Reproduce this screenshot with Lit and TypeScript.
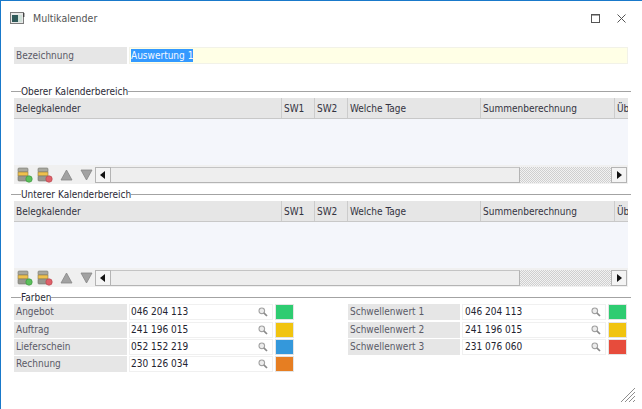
import { LitElement, html, css, svg } from "lit";
import { customElement } from "lit/decorators.js";

const COLS = [
  { t: "Belegkalender", w: 268 },
  { t: "SW1", w: 33 },
  { t: "SW2", w: 33 },
  { t: "Welche Tage", w: 133 },
  { t: "Summenberechnung", w: 134 },
  { t: "Üb", w: 13 },
];

const dbIcon = (c: string, d: string) => svg`<svg class="tool" viewBox="0 0 16 16" width="16" height="16">
  <rect x="1" y="1" width="10" height="4" rx="1" fill="#a8a8a0" stroke="#77776f" stroke-width=".6"/>
  <rect x="1" y="5" width="10" height="4" fill="#efc04c" stroke="#8a7a4a" stroke-width=".6"/>
  <rect x="1" y="9" width="10" height="5" rx="1" fill="#98988f" stroke="#77776f" stroke-width=".6"/>
  <circle cx="12" cy="12" r="3.2" fill="${c}" stroke="${d}" stroke-width=".7"/>
</svg>`;

const tri = (up: boolean) => svg`<svg class="tool" viewBox="0 0 13 12" width="13" height="12">
  <path d="${up ? "M6.5 1 L12 11 H1 Z" : "M1 1 H12 L6.5 11 Z"}" fill="#a2a2a2" stroke="#858585" stroke-width=".8"/>
</svg>`;

const lens = svg`<svg class="lens" viewBox="0 0 10 10" width="10" height="10">
  <circle cx="3.8" cy="3.8" r="2.8" fill="#ececec" stroke="#a2a2a2" stroke-width="1.1"/>
  <path d="M5.8 5.8 L9 9" stroke="#8a8a8a" stroke-width="1.7"/>
</svg>`;

@customElement("app-root")
export class AppRoot extends LitElement {
  static styles = css`
    :host {
      display: block;
      width: 642px;
      height: 409px;
      overflow: hidden;
      font-family: "DejaVu Sans Condensed", "DejaVu Sans", sans-serif;
      font-stretch: condensed;
    }
    .win {
      position: relative;
      box-sizing: border-box;
      height: 409px;
      background: #fff;
      border-top: 1px solid #1979ca;
      border-left: 1px solid #1979ca;
      padding: 0 11px 0 10px;
      font-size: 10px;
      color: #3a3a46;
      display: flex;
      flex-direction: column;
    }
    .title {
      height: 34px;
      margin: 0 -11px 0 -10px;
      padding: 0 0 0 9px;
      display: flex;
      align-items: center;
      gap: 8px;
      color: #555;
      font-size: 10.5px;
    }
    .ctrls { margin-left: auto; display: flex; gap: 17px; padding-right: 16px; align-items: center; }
    .ctrls svg { display: block; }
    .inner { padding: 0 3px; }
    .row { display: flex; gap: 2px; }
    .lab {
      width: 111px;
      padding-left: 2px;
      background: #e6e6e6;
      line-height: 16px;
      color: #5a5a66;
      white-space: nowrap;
      overflow: hidden;
    }
    .bez { margin-top: 12px; height: 17px; }
    .bez .lab { line-height: 17px; }
    .inp {
      flex: 1;
      box-sizing: border-box;
      background: #ffffe6;
      border: 1px solid #f2f2e8;
      padding-left: 1px;
      line-height: 14px;
    }
    .sel { background: #3399ff; color: #f4f8ff; display: inline-block; height: 13px; line-height: 13px; margin-top: 1px; }
    .legend { display: flex; align-items: center; height: 13px; color: #2a2a36; }
    .legend i { height: 1px; background: #a3a3a3; }
    .legend i:first-child { width: 10px; }
    .legend i:last-child { flex: 1; }
    .legend.l1 { margin-top: 21px; }
    .legend.l2 { margin-top: 4px; }
    .grid {
      height: 86px;
      background: #f4f6fb;
      display: flex;
      flex-direction: column;
    }
    .head {
      display: flex;
      box-sizing: border-box;
      height: 21px;
      background: #e6e6e6;
      border-bottom: 1px solid #c8c8c8;
      flex: none;
      overflow: hidden;
    }
    .head div {
      box-sizing: border-box;
      flex: none;
      padding-left: 2px;
      line-height: 21px;
      border-right: 1px solid #cccccc;
      white-space: nowrap;
      color: #33333f;
    }
    .head div:last-child { border-right: 0; overflow: hidden; padding-right: 0; }
    .spacer { flex: 1; }
    .bar { display: flex; align-items: center; height: 19px; padding-left: 3px; background: #f0f0f0; }
    .tool { display: block; }
    .tools { display: flex; align-items: center; width: 78px; gap: 4px; }
    .tools svg:nth-child(3) { margin-left: 3px; }
    .tools svg:nth-child(4) { margin-left: 3px; }
    .sb { flex: 1; display: flex; height: 16px; align-items: stretch; margin-right: 1px; }
    .btn {
      box-sizing: border-box;
      width: 16px;
      background: #f4f4f4;
      border: 1px solid #b4b4b4;
      display: flex;
      align-items: center;
      justify-content: center;
      flex: none;
    }
    .thumb { box-sizing: border-box; width: 409px; background: #eeeeee; border: 1px solid #b4b4b4; border-left: 0; border-top-color: #c4c4c4; flex: none; }
    .track {
      flex: 1;
      background-color: #e4e4e4;
      background-image: repeating-conic-gradient(#cfcfcf 0 25%, #f2f2f2 0 50%);
      background-size: 2px 2px;
    }
    .farben { display: flex; }
    .fcol { display: flex; flex-direction: column; gap: 1px; width: 280px; }
    .fcol.r { margin-left: 54px; }
    .frow { display: flex; height: 16px; gap: 2px; }
    .frow:first-child { margin-bottom: 1px; }
    .frow .lab { width: 111px; }
    .r .frow .lab { width: 110px; }
    .val {
      box-sizing: border-box;
      width: 144px;
      display: flex;
      align-items: center;
      justify-content: space-between;
      padding: 0 4px 1px 1px;
      border: 1px solid #f0f0f0;
      color: #23232f;
    }
    .r .val { padding-left: 2px; }
    .sw { box-sizing: border-box; width: 19px; border: 1px solid #e4e4e4; }
    .grip { position: absolute; right: 7px; bottom: 7px; }
  `;

  private section(title: string, cls: string) {
    return html`
      <div class="legend ${cls}"><i></i><span>${title}</span><i></i></div>
      <div class="inner">
        <div class="grid">
          <div class="head">
            ${COLS.map((c) => html`<div style="width:${c.w}px">${c.t}</div>`)}
          </div>
          <div class="spacer"></div>
          <div class="bar">
            <div class="tools">
              ${dbIcon("#5cc05c", "#3f9a3f")}${dbIcon("#e0606a", "#b84a50")}${tri(true)}${tri(false)}
            </div>
            <div class="sb">
              <div class="btn"><svg width="6" height="8" viewBox="0 0 6 8"><path d="M5 0V8L0 4Z" fill="#111"/></svg></div>
              <div class="thumb"></div>
              <div class="track"></div>
              <div class="btn"><svg width="6" height="8" viewBox="0 0 6 8"><path d="M1 0V8L6 4Z" fill="#111"/></svg></div>
            </div>
          </div>
        </div>
      </div>`;
  }

  private frow(l: string, v: string, c: string) {
    return html`<div class="frow">
      <div class="lab">${l}</div>
      <div class="val"><span>${v}</span>${lens}</div>
      <div class="sw" style="background:${c}"></div>
    </div>`;
  }

  render() {
    return html`<div class="win">
      <div class="title">
        <svg width="15" height="13" viewBox="0 0 15 13">
          <rect x=".5" y=".5" width="13" height="11" fill="#e8e8e8" stroke="#7b7b7b"/>
          <rect x="2" y="3" width="6" height="7" fill="#2f5a5a"/>
          <rect x="8" y="3" width="4" height="7" fill="#cfe0d8"/>
          <rect x="13" y="1" width="1.4" height="4" fill="#444"/>
        </svg>
        <span>Multikalender</span>
        <div class="ctrls">
          <svg width="9" height="9" viewBox="0 0 9 9"><rect x=".5" y=".5" width="8" height="8" fill="none" stroke="#555"/><path d="M0 1H9" stroke="#555"/></svg>
          <svg width="9" height="9" viewBox="0 0 9 9"><path d="M.5 .5L8.5 8.5M8.5 .5L.5 8.5" stroke="#555" fill="none"/></svg>
        </div>
      </div>
      <div class="inner">
        <div class="row bez">
          <div class="lab">Bezeichnung</div>
          <div class="inp"><span class="sel">Auswertung 1</span></div>
        </div>
      </div>
      ${this.section("Oberer Kalenderbereich", "l1")}
      ${this.section("Unterer Kalenderbereich", "l2")}
      <div class="legend l2"><i></i><span>Farben</span><i></i></div>
      <div class="inner farben">
        <div class="fcol">
          ${this.frow("Angebot", "046 204 113", "#2ecc71")}
          ${this.frow("Auftrag", "241 196 015", "#f1c40f")}
          ${this.frow("Lieferschein", "052 152 219", "#3498db")}
          ${this.frow("Rechnung", "230 126 034", "#e67e22")}
        </div>
        <div class="fcol r">
          ${this.frow("Schwellenwert 1", "046 204 113", "#2ecc71")}
          ${this.frow("Schwellenwert 2", "241 196 015", "#f1c40f")}
          ${this.frow("Schwellenwert 3", "231 076 060", "#e74c3c")}
        </div>
      </div>
      <svg class="grip" width="14" height="14" viewBox="0 0 14 14">
        <path d="M0 14L14 0M4 14L14 4M8 14L14 8M12 14L14 12" stroke="#8e8e8e" fill="none"/>
      </svg>
    </div>`;
  }
}
